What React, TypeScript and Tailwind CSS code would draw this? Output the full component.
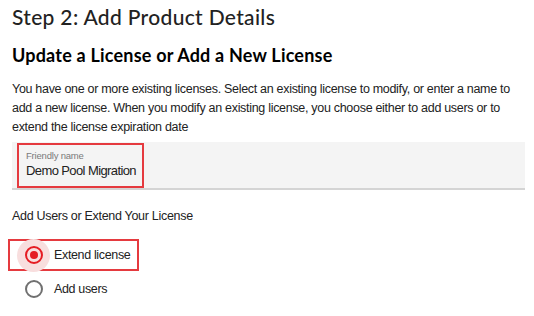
export default function App() {
  return (
    <div className="w-[534px] h-[316px] bg-white overflow-hidden px-3 pt-[2px] font-['Liberation_Sans',Arial,sans-serif] text-[#222]">
      <h1 className="font-['Lato',sans-serif] text-[21px] leading-[30px] font-medium tracking-[0.33px] text-[#222]">
        Step 2: Add Product Details
      </h1>
      <h2 className="mt-[11px] font-['Lato',sans-serif] text-[18px] leading-[24px] font-bold tracking-[0.2px] text-black">
        Update a License or Add a New License
      </h2>
      <p className="mt-[13px] w-[515px] text-[12.5px] leading-[19px] tracking-[-0.3px] text-[#222]">
        You have one or more existing licenses. Select an existing license to modify, or enter a name to
        add a new license. When you modify an existing license, you choose either to add users or to
        extend the license expiration date
      </p>

      <div className="mt-[5px] h-[48px] w-[513px] bg-[#f4f4f4] border-b-2 border-[#d4d4d4] flex items-start pt-[1px] pl-[5px]">
        <div className="w-[127px] h-[45px] border-2 border-[#e53a3f] flex flex-col pt-[5px] pl-[7px]">
          <span className="text-[9.5px] leading-[12px] tracking-[-0.2px] text-[#7a7a7a]">Friendly name</span>
          <span className="mt-[1px] text-[13px] leading-[16px] tracking-[-0.6px] whitespace-nowrap text-[#222]">Demo Pool Migration</span>
        </div>
      </div>

      <div className="mt-[18px] text-[12.5px] leading-[16px] tracking-[-0.3px] text-[#222]">Add Users or Extend Your License</div>

      <div className="mt-[15px] -ml-[4px] w-[131px] h-[32px] border-2 border-[#e53a3f] flex items-center">
        <div className="relative ml-[5.5px] w-[36px] h-[28px] flex items-center justify-center">
          <div className="absolute w-[33px] h-[33px] rounded-full bg-[#f8dede]" />
          <div className="relative w-[18px] h-[18px] rounded-full border-2 border-[#e51c23] flex items-center justify-center">
            <div className="w-[8px] h-[8px] rounded-full bg-[#e51c23]" />
          </div>
        </div>
        <span className="ml-[2.5px] text-[12.5px] tracking-[-0.35px] whitespace-nowrap text-[#222]">Extend license</span>
      </div>

      <div className="mt-[2px] flex items-center h-[32px]">
        <div className="ml-[3.5px] w-[36px] flex items-center justify-center">
          <div className="w-[18px] h-[18px] rounded-full border-2 border-[#707070]" />
        </div>
        <span className="ml-[2.5px] text-[12.5px] tracking-[-0.35px] text-[#222]">Add users</span>
      </div>
    </div>
  );
}
